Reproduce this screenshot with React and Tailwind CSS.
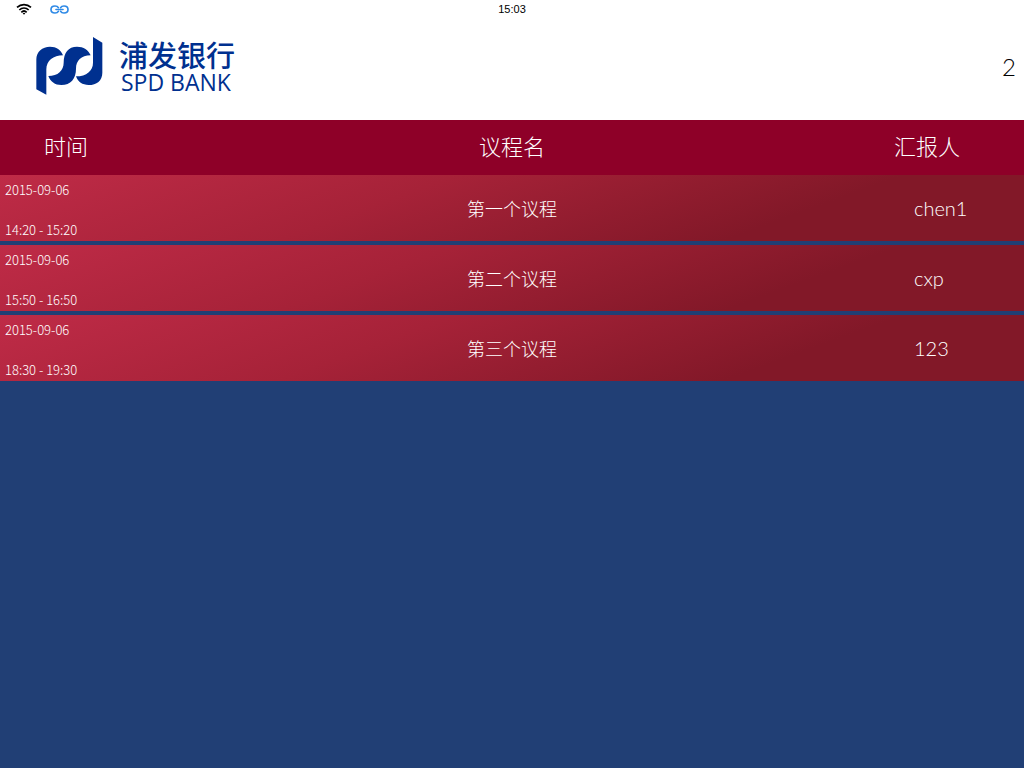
const agenda = [
  { date: "2015-09-06", time: "14:20 - 15:20", title: "第一个议程", reporter: "chen1" },
  { date: "2015-09-06", time: "15:50 - 16:50", title: "第二个议程", reporter: "cxp" },
  { date: "2015-09-06", time: "18:30 - 19:30", title: "第三个议程", reporter: "123" },
];

function WifiIcon() {
  return (
    <svg viewBox="0 0 48 36" className="h-3 w-4" fill="none" stroke="#000" strokeWidth="5" aria-hidden="true">
      <path d="M3 13C15 2 33 2 45 13" />
      <path d="M10 21C18 13 30 13 38 21" />
      <path d="M16 28C21 23 27 23 32 28" />
      <path d="M20 31L24 35L28 31C26 29 22 29 20 31Z" fill="#000" stroke="none" />
    </svg>
  );
}

function LinkIcon() {
  return (
    <svg viewBox="0 0 57 27" className="h-[9px] w-[19px]" fill="none" stroke="#2f8ae6" strokeWidth="5" strokeLinecap="round" aria-hidden="true">
      <path d="M25 8C23 4 19 3 15 3C8 3 3 7 3 13.500S8 24 15 24C19 24 23 23 25 19" />
      <path d="M32 8C34 4 38 3 42 3C49 3 54 7 54 13.500S49 24 42 24C38 24 34 23 32 19" />
      <path d="M18 13.500H39" />
    </svg>
  );
}

function BankMark() {
  return (
    <svg viewBox="33 21 199 174" className="h-[58px] w-[67px]" fill="#00308f" aria-hidden="true">
      <path d="M33 178V88C33 65 51 50 74 50C93 50 107 60 113 76C84 77 63 92 63 118V194Z" />
      <path d="M69 138C98 138 115 121 115 98C115 68 129 50 155 50C175 50 189 60 196 76C167 76 152 93 152 116C152 146 136 165 108 165C89 165 75 155 69 138Z" />
      <path d="M203 21L231 38V128C231 152 214 165 190 165C171 165 158 156 152 139C184 139 203 122 203 98Z" />
    </svg>
  );
}

export default function App() {
  return (
    <div className="flex min-h-screen flex-col bg-[#213f75] font-['Lato','Noto_Sans_CJK_SC',sans-serif]">
      <div className="grid h-[18px] grid-cols-3 items-center bg-white px-4">
        <div className="flex items-center gap-[18px]">
          <WifiIcon />
          <LinkIcon />
        </div>
        <time className="text-center font-['Liberation_Sans',sans-serif] text-[11px] leading-4 text-black">15:03</time>
      </div>

      <header className="flex h-[102px] items-center justify-between bg-white pr-2 pb-1 pl-9">
        <div className="flex items-center gap-4 pb-0.5 text-[#00308f]">
          <BankMark />
          <div className="flex flex-col">
            <span className="font-['Noto_Sans_CJK_SC',sans-serif] text-[29px] leading-8 font-medium">浦发银行</span>
            <span className="pl-0.5 font-['Open_Sans',sans-serif] text-[23px] leading-6">SPD BANK</span>
          </div>
        </div>
        <span className="text-[24px] leading-8 font-light text-black">2</span>
      </header>

      <table className="block w-full font-light text-white">
        <thead className="block bg-[#8e0028]">
          <tr className="grid h-[55px] grid-cols-[132px_1fr_132px] items-center pb-0.5 text-[22px] leading-8">
            <th scope="col" className="font-light">时间</th>
            <th scope="col" className="font-light">议程名</th>
            <th scope="col" className="pr-16 text-right font-light whitespace-nowrap">汇报人</th>
          </tr>
        </thead>
        <tbody className="flex flex-col gap-1">
          {agenda.map((item) => (
            <tr
              key={item.time}
              className="grid h-[66px] grid-cols-[110px_1fr_110px] items-center bg-linear-[160deg] from-[#bf2b47] from-0% via-[#a62238] via-38% to-[#821828] to-75%"
            >
              <td className="flex h-full flex-col justify-between pt-1.5 pb-0.5 pl-[5px] font-['Noto_Sans_CJK_SC',sans-serif] text-[13px] leading-[18px] whitespace-nowrap">
                <span>{item.date}</span>
                <span>{item.time}</span>
              </td>
              <td className="pt-0.5 text-center text-[18px] leading-7">{item.title}</td>
              <td className="text-[20px] leading-7">{item.reporter}</td>
            </tr>
          ))}
        </tbody>
      </table>
    </div>
  );
}
